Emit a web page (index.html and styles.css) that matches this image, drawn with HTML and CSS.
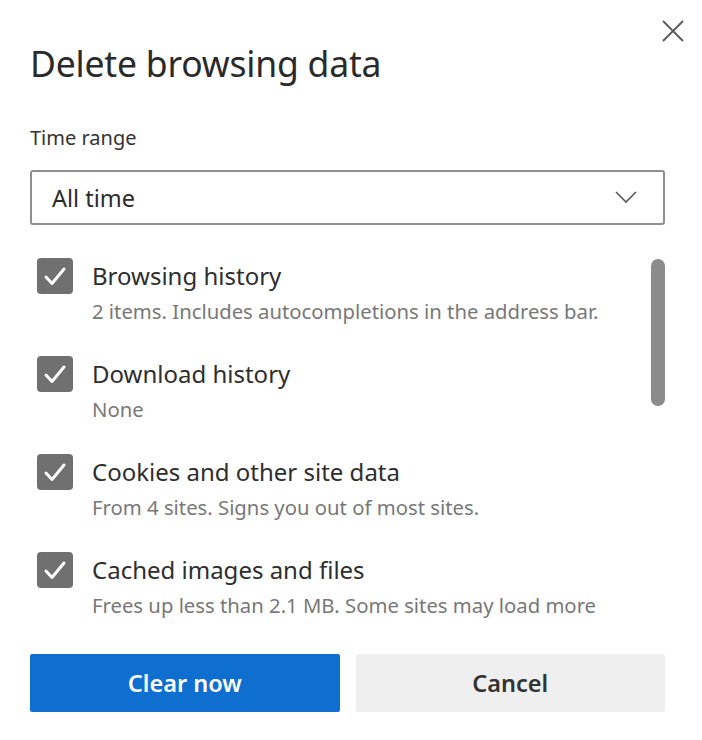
FILE: index.html
```html
<!DOCTYPE html>
<html lang="en">
<head>
<meta charset="utf-8">
<title>Delete browsing data</title>
<link rel="stylesheet" href="styles.css">
</head>
<body>
<div class="dialog">
  <div class="topbar">
    <button class="close" aria-label="Close">
      <svg width="22" height="22" viewBox="0 0 22 22"><path d="M1 1 L21 21 M21 1 L1 21" stroke="#5a5a5a" stroke-width="1.8" fill="none"/></svg>
    </button>
  </div>
  <h1 class="title">Delete browsing data</h1>
  <div class="label">Time range</div>
  <div class="select">
    <span class="select-value">All time</span>
    <svg class="chevron" width="22" height="13" viewBox="0 0 22 13"><path d="M1 1 L11 11 L21 1" stroke="#5a5a5a" stroke-width="1.6" fill="none"/></svg>
  </div>
  <div class="list-wrap">
    <div class="list">
      <div class="row">
        <span class="check"><svg width="36" height="36" viewBox="0 0 36 36"><path d="M9 19 L15 25.5 L27 11" stroke="#fff" stroke-width="3" fill="none" stroke-linecap="round" stroke-linejoin="round"/></svg></span>
        <div class="text">
          <div class="item-title">Browsing history</div>
          <div class="item-sub">2 items. Includes autocompletions in the address bar.</div>
        </div>
      </div>
      <div class="row">
        <span class="check"><svg width="36" height="36" viewBox="0 0 36 36"><path d="M9 19 L15 25.5 L27 11" stroke="#fff" stroke-width="3" fill="none" stroke-linecap="round" stroke-linejoin="round"/></svg></span>
        <div class="text">
          <div class="item-title">Download history</div>
          <div class="item-sub">None</div>
        </div>
      </div>
      <div class="row">
        <span class="check"><svg width="36" height="36" viewBox="0 0 36 36"><path d="M9 19 L15 25.5 L27 11" stroke="#fff" stroke-width="3" fill="none" stroke-linecap="round" stroke-linejoin="round"/></svg></span>
        <div class="text">
          <div class="item-title">Cookies and other site data</div>
          <div class="item-sub">From 4 sites. Signs you out of most sites.</div>
        </div>
      </div>
      <div class="row">
        <span class="check"><svg width="36" height="36" viewBox="0 0 36 36"><path d="M9 19 L15 25.5 L27 11" stroke="#fff" stroke-width="3" fill="none" stroke-linecap="round" stroke-linejoin="round"/></svg></span>
        <div class="text">
          <div class="item-title">Cached images and files</div>
          <div class="item-sub">Frees up less than 2.1 MB. Some sites may load more</div>
        </div>
      </div>
    </div>
    <div class="scroll-track"><div class="scroll-thumb"></div></div>
  </div>
  <div class="buttons">
    <button class="btn primary">Clear now</button>
    <button class="btn secondary">Cancel</button>
  </div>
</div>
</body>
</html>
```

FILE: styles.css
```css
* { box-sizing: border-box; }
html, body { margin: 0; padding: 0; background: #fff; }
body {
  font-family: "Noto Sans", "Open Sans", sans-serif;
  color: #2b2b2b;
  width: 702px;
  height: 740px;
  overflow: hidden;
}
.dialog {
  padding: 0 37px 0 30px;
}
.topbar {
  display: flex;
  justify-content: flex-end;
  padding-top: 20px;
  margin-right: -19px;
  height: 42px;
}
.close {
  border: none;
  background: transparent;
  padding: 0;
  width: 22px;
  height: 22px;
  display: block;
}
.close svg { display: block; }
.title {
  margin: 0;
  font-size: 35.5px;
  font-weight: 400;
  line-height: 42px;
  color: #2a2a2a;
  letter-spacing: -0.2px;
}
.label {
  margin-top: 41px;
  font-size: 20px;
  line-height: 26px;
  color: #333;
}
.select {
  margin-top: 19px;
  height: 55px;
  border: 2px solid #8f8f8f;
  border-radius: 3px;
  display: flex;
  align-items: center;
  justify-content: space-between;
  padding: 0 26px 0 20px;
}
.select-value {
  font-size: 23.5px;
  color: #2b2b2b;
}
.chevron { display: block; }
.list-wrap {
  margin-top: 33px;
  display: flex;
  justify-content: space-between;
}
.list {
  padding-left: 7px;
  display: flex;
  flex-direction: column;
  gap: 26px;
}
.row {
  display: flex;
  gap: 19px;
  height: 72px;
}
.check {
  width: 36px;
  height: 36px;
  border-radius: 4px;
  background: #707070;
  flex: none;
}
.check svg { display: block; }
.item-title {
  font-size: 24px;
  line-height: 36px;
  color: #2e2e2e;
}
.item-sub {
  margin-top: 4px;
  font-size: 20.3px;
  line-height: 26px;
  color: #787878;
  white-space: nowrap;
}
.scroll-track {
  width: 14px;
  padding-top: 1px;
}
.scroll-thumb {
  width: 14px;
  height: 147px;
  border-radius: 7px;
  background: #8b8b8b;
}
.buttons {
  margin-top: 30px;
  display: grid;
  grid-template-columns: 1fr 1fr;
  gap: 16px;
}
.btn {
  height: 58px;
  border: none;
  border-radius: 2px;
  font-family: "Noto Sans", "Open Sans", sans-serif;
  font-size: 23.5px;
  font-weight: 600;
}
.primary {
  background: #0f6fd1;
  color: #fff;
}
.secondary {
  background: #efefef;
  color: #333;
}
```
